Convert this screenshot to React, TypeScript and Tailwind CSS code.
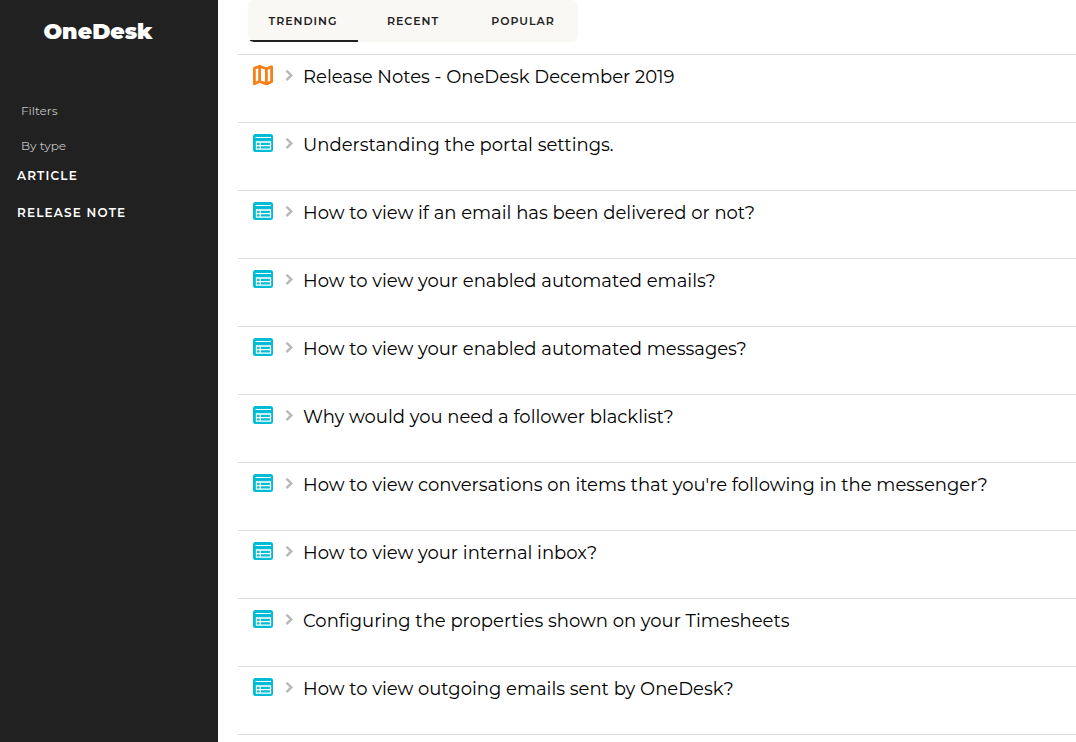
import React, { useState } from 'react';

type Kind = 'release' | 'article';

const tabs = ['Trending', 'Recent', 'Popular'];

const filters = ['Article', 'Release note'];

const articles: { title: string; kind: Kind }[] = [
  { title: 'Release Notes - OneDesk December 2019', kind: 'release' },
  { title: 'Understanding the portal settings.', kind: 'article' },
  { title: 'How to view if an email has been delivered or not?', kind: 'article' },
  { title: 'How to view your enabled automated emails?', kind: 'article' },
  { title: 'How to view your enabled automated messages?', kind: 'article' },
  { title: 'Why would you need a follower blacklist?', kind: 'article' },
  { title: "How to view conversations on items that you're following in the messenger?", kind: 'article' },
  { title: 'How to view your internal inbox?', kind: 'article' },
  { title: 'Configuring the properties shown on your Timesheets', kind: 'article' },
  { title: 'How to view outgoing emails sent by OneDesk?', kind: 'article' },
];

function MapIcon() {
  return (
    <svg viewBox="0 0 22 22" className="size-[22px] shrink-0" fill="none" stroke="#f97f16" strokeWidth="2.8" strokeLinejoin="round" aria-hidden="true">
      <path d="M2.4 4.2 7.6 2.3l6.8 2.4 5.2-2v15l-5.2 2.2-6.8-2.4-5.2 2.2z" />
      <path d="M7.6 2.4v15M14.4 4.8v15" />
    </svg>
  );
}

function ArticleIcon() {
  return (
    <svg viewBox="0 0 22 22" className="size-[22px] shrink-0" aria-hidden="true">
      <rect x="1" y="2" width="20" height="18" rx="2.5" fill="#00bcd4" />
      <path d="M3.5 5.5h15.5" stroke="#fff" strokeWidth="1" />
      <path
        d="M4.5 10h14v7.2h-14zM4.5 13.6h14M8.3 10v7.2"
        fill="none"
        stroke="#fff"
        strokeWidth="1.3"
      />
    </svg>
  );
}

function Chevron() {
  return (
    <svg viewBox="0 0 10 12" className="h-3 w-[10px] shrink-0" fill="none" stroke="#b8b8b8" strokeWidth="2.4" aria-hidden="true">
      <path d="m1.5 1.7 4.8 4.7-4.8 4.7" />
    </svg>
  );
}

export default function App() {
  const [active, setActive] = useState('Trending');

  return (
    <div className="flex h-screen overflow-hidden bg-white font-['Montserrat','Inter',sans-serif] text-black">
      <aside className="w-[218px] shrink-0 bg-[#212121] pt-4 text-white">
        <h1 className="pr-[22px] text-center text-[22px]/8 font-black">OneDesk</h1>
        <div className="mt-[53px] px-[21px] text-xs/5 text-[#c0c0c0]">
          <h2>Filters</h2>
          <h3 className="mt-[15px]">By type</h3>
        </div>
        <nav className="mt-px flex flex-col px-[17px]" aria-label="Filter by type">
          {filters.map((name) => (
            <a key={name} href="#" className="text-xs/[37px] font-semibold tracking-widest uppercase">
              {name}
            </a>
          ))}
        </nav>
      </aside>

      <main className="min-w-0 flex-1 pl-5">
        <div role="tablist" className="ml-[10px] flex w-fit overflow-hidden rounded-md bg-[#f9f8f4]">
          {tabs.map((name) => (
            <button
              key={name}
              role="tab"
              type="button"
              aria-selected={active === name}
              onClick={() => setActive(name)}
              className={`h-[42px] w-[110px] border-b-2 pt-0.5 text-[11px] font-semibold tracking-[1px] text-[#212121] uppercase ${
                active === name ? 'border-[#212121]' : 'border-transparent'
              }`}
            >
              {name}
            </button>
          ))}
        </div>

        <ul className="mt-3 border-t border-[#dcdcdc]">
          {articles.map(({ title, kind }) => (
            <li key={title} className="h-[68px] border-b border-[#dcdcdc] pt-[9px] pl-[14px]">
              <a href="#" className="flex items-start">
                {kind === 'release' ? <MapIcon /> : <ArticleIcon />}
                <span className="mr-2 ml-[11px] flex h-6 items-center pb-0.5">
                  <Chevron />
                </span>
                <span className="truncate text-lg/[26px]">{title}</span>
              </a>
            </li>
          ))}
        </ul>
      </main>
    </div>
  );
}
